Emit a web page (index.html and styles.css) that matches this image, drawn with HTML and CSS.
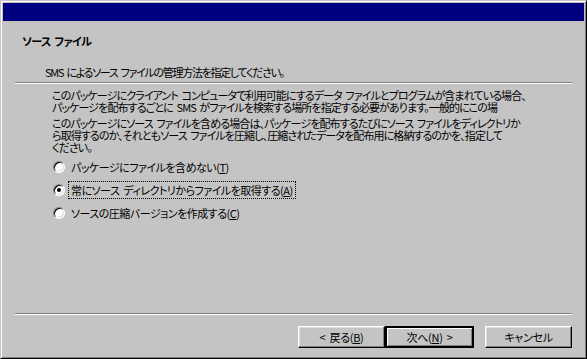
FILE: index.html
```
<!DOCTYPE html>
<html lang="ja">
<head>
    <meta charset="UTF-8">
    <title>ソース ファイル</title>
    <link rel="stylesheet" href="styles.css">
</head>
<body>

    <div class="window">
        <div class="caption"></div>

        <div class="header">
            <h1 class="title">ソース ファイル</h1>
            <p class="subtitle">SMS によるソース ファイルの管理方法を指定してください。</p>
        </div>

        <hr class="sep top-sep">

        <div class="desc">
            <p>このパッケージにクライアント コンピュータで利用可能にするデータ ファイルとプログラムが含まれている場合、<br>パッケージを配布するごとに SMS がファイルを検索する場所を指定する必要があります。一般的にこの場</p>
            <p>このパッケージにソース ファイルを含める場合は、パッケージを配布するたびにソース ファイルをディレクトリか<br>ら取得するのか、それともソース ファイルを圧縮し、圧縮されたデータを配布用に格納するのかを、指定して<br>ください。</p>
        </div>

        <div class="options">
            <label class="option">
                <span class="radio"></span>
                <span class="label">パッケージにファイルを含めない(<u>T</u>)</span>
            </label>
            <label class="option">
                <span class="radio checked"></span>
                <span class="label focused">常にソース ディレクトリからファイルを取得する(<u>A</u>)</span>
            </label>
            <label class="option">
                <span class="radio"></span>
                <span class="label">ソースの圧縮バージョンを作成する(<u>C</u>)</span>
            </label>
        </div>

        <hr class="sep bottom-sep">

        <div class="buttons">
            <button class="btn">&lt; 戻る(<u>B</u>)</button>
            <button class="btn default">次へ(<u>N</u>) &gt;</button>
            <button class="btn cancel">キャンセル</button>
        </div>
    </div>

</body>
</html>
```

FILE: styles.css
```
body {
    margin: 0;
    padding: 0;
    background-color: #c4c4c4;
    font-family: "Noto Sans CJK JP", sans-serif;
    font-size: 11px;
    line-height: 12px;
    letter-spacing: -0.7px;
    word-spacing: 2px;
    color: black;
    font-feature-settings: "palt";
}

.window {
    box-sizing: border-box;
    width: 587px;
    height: 359px;
    padding: 1px;
    border: 1px solid;
    border-color: #c4c4c4 #000000 #000000 #c4c4c4;
    box-shadow: inset 1px 1px #ffffff, inset -1px -1px #808080;
    display: flex;
    flex-direction: column;
    overflow: hidden;
}

.caption {
    height: 18px;
    margin: 1px 1px 0 1px;
    background-color: #000080;
    flex-shrink: 0;
}

.header {
    padding-left: 20px;
}

.title {
    margin: 14px 0 0 0;
    font-size: 11px;
    line-height: 12px;
    font-weight: bold;
    letter-spacing: -0.6px;
}

.subtitle {
    margin: 19px 0 0 23px;
    letter-spacing: -1.3px;
}

.sep {
    height: 0;
    margin: 0 13px 0 13px;
    border: none;
    border-top: 1px solid #808080;
    border-bottom: 1px solid #ffffff;
}

.top-sep {
    margin-top: 4px;
}

.desc {
    padding-left: 50px;
    margin-top: 5px;
    white-space: nowrap;
    letter-spacing: -0.9px;
}

.desc p {
    margin: 0 0 4px 0;
}

.desc p:last-child {
    margin-bottom: 2px;
}

.options {
    padding-left: 51px;
}

.option {
    display: flex;
    align-items: center;
    height: 23px;
}

.radio {
    box-sizing: border-box;
    width: 12px;
    height: 12px;
    border-radius: 50%;
    border: 1px solid;
    border-color: #808080 #ffffff #ffffff #808080;
    box-shadow: inset 1px 1px #000000, inset -1px -1px #dcdcdc;
    background-color: #ffffff;
    display: flex;
    align-items: center;
    justify-content: center;
    flex-shrink: 0;
}

.radio.checked::after {
    content: "";
    width: 4px;
    height: 4px;
    border-radius: 50%;
    background-color: #000000;
}

.label {
    margin-left: 3px;
    padding: 2px 2px;
    border: 1px dotted transparent;
    letter-spacing: -0.5px;
}

.label.focused {
    border-color: #000000;
}

.bottom-sep {
    margin-top: auto;
}

.buttons {
    display: flex;
    justify-content: flex-end;
    padding: 11px 13px 9px 0;
}

.btn {
    box-sizing: border-box;
    width: 87px;
    height: 22px;
    padding: 0;
    font-family: "Noto Sans CJK JP", sans-serif;
    font-size: 11px;
    letter-spacing: -0.3px;
    word-spacing: 2px;
    color: black;
    background-color: #c4c4c4;
    border: 1px solid;
    border-color: #ffffff #000000 #000000 #ffffff;
    box-shadow: inset -1px -1px #808080, inset 1px 1px #dfdfdf;
    font-feature-settings: "palt";
}

.btn.default {
    width: 89px;
    border: 2px solid;
    border-color: #000000;
    box-shadow: inset 1px 1px #ffffff, inset -1px -1px #808080;
}

.btn.cancel {
    margin-left: 11px;
}
```
